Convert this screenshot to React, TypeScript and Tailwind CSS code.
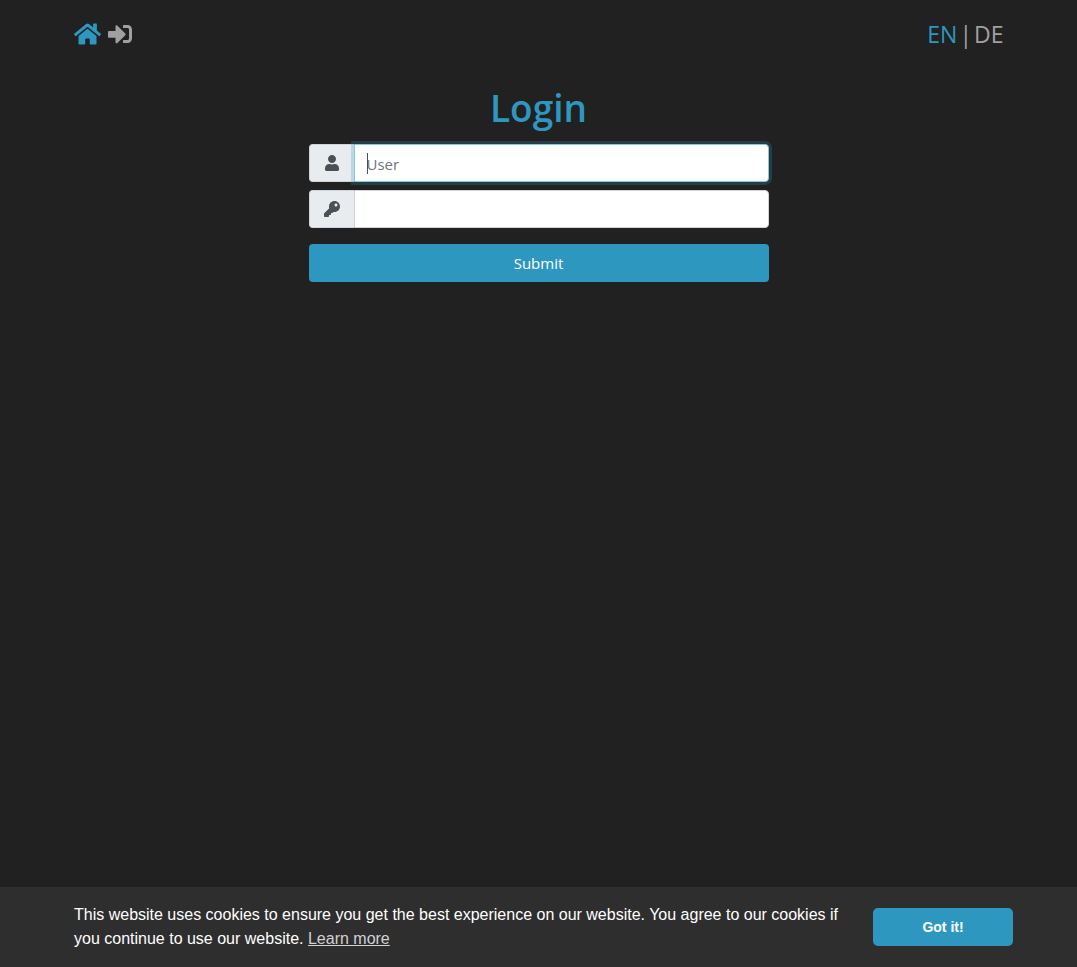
import { FaHome, FaKey, FaSignInAlt, FaUser } from 'react-icons/fa';

function Header() {
  return (
    <header className="mx-auto flex w-full max-w-[960px] items-center justify-between px-[15px] pt-4 text-[23px] leading-9">
      <nav className="flex items-center gap-[7px]" aria-label="Main">
        <a href="#home" aria-label="Home" className="text-[#2e97bf]">
          <FaHome className="h-6 w-[27px]" />
        </a>
        <a href="#login" aria-label="Login" className="text-[#a0a0a0]">
          <FaSignInAlt className="size-6" />
        </a>
      </nav>
      <div className="flex gap-0.5 text-[#a0a0a0]">
        <a href="#en" className="text-[#2e97bf]">EN</a>
        <span>|</span>
        <a href="#de">DE</a>
      </div>
    </header>
  );
}

function LoginForm() {
  return (
    <main className="mx-auto w-full max-w-[492px] px-4 pt-[30px]">
      <h1 className="mb-2.5 text-center text-[37px] leading-[52px] font-semibold text-[#2e97bf]">Login</h1>
      <form onSubmit={(event) => event.preventDefault()}>
        <div className="mb-2 flex h-[38px]">
          <label
            htmlFor="user"
            className="flex w-[45px] shrink-0 items-center justify-center rounded-l border border-r-0 border-[#ced4da] bg-[#e9ecef] text-[#495057]"
          >
            <FaUser className="size-4" aria-label="User" />
          </label>
          <div className="relative flex min-w-0 flex-1">
            <input
              id="user"
              type="text"
              placeholder="User"
              className="w-full rounded-r border border-[#85c8e1] bg-white px-3 pt-0.5 text-[15px] text-[#495057] ring-3 ring-[#2e97bf]/25 outline-none placeholder:text-[#6c757d]"
            />
            <span className="pointer-events-none absolute top-[9px] left-[13px] h-[21px] w-px bg-[#495057]" />
          </div>
        </div>
        <div className="mb-4 flex h-[38px]">
          <label
            htmlFor="password"
            className="flex w-[45px] shrink-0 items-center justify-center rounded-l border border-r-0 border-[#ced4da] bg-[#e9ecef] text-[#495057]"
          >
            <FaKey className="size-4" aria-label="Password" />
          </label>
          <input
            id="password"
            type="password"
            className="min-w-0 flex-1 rounded-r border border-[#ced4da] bg-white px-3 text-[15px] text-[#495057] outline-none"
          />
        </div>
        <button type="submit" className="h-[38px] w-full rounded bg-[#2e97bf] text-[15px] text-white">
          Submit
        </button>
      </form>
    </main>
  );
}

function CookieBanner() {
  return (
    <aside
      aria-label="Cookie consent"
      className="mt-auto flex items-center gap-4 bg-[#2e2e2e] py-4 pr-16 pl-[74px] font-['Liberation_Sans',Arial,sans-serif] text-base text-white"
    >
      <p className="flex-1">
        This website uses cookies to ensure you get the best experience on our website. You agree to our cookies if you
        continue to use our website.{' '}
        <a href="#cookies" className="text-[#d1d1d1] underline">Learn more</a>
      </p>
      <button type="button" className="h-[38px] w-[140px] shrink-0 rounded-[5px] bg-[#2e97bf] text-sm font-bold">
        Got it!
      </button>
    </aside>
  );
}

export default function App() {
  return (
    <div className="flex min-h-screen flex-col bg-[#212121] font-['Open_Sans','Noto_Sans',sans-serif]">
      <Header />
      <LoginForm />
      <CookieBanner />
    </div>
  );
}
